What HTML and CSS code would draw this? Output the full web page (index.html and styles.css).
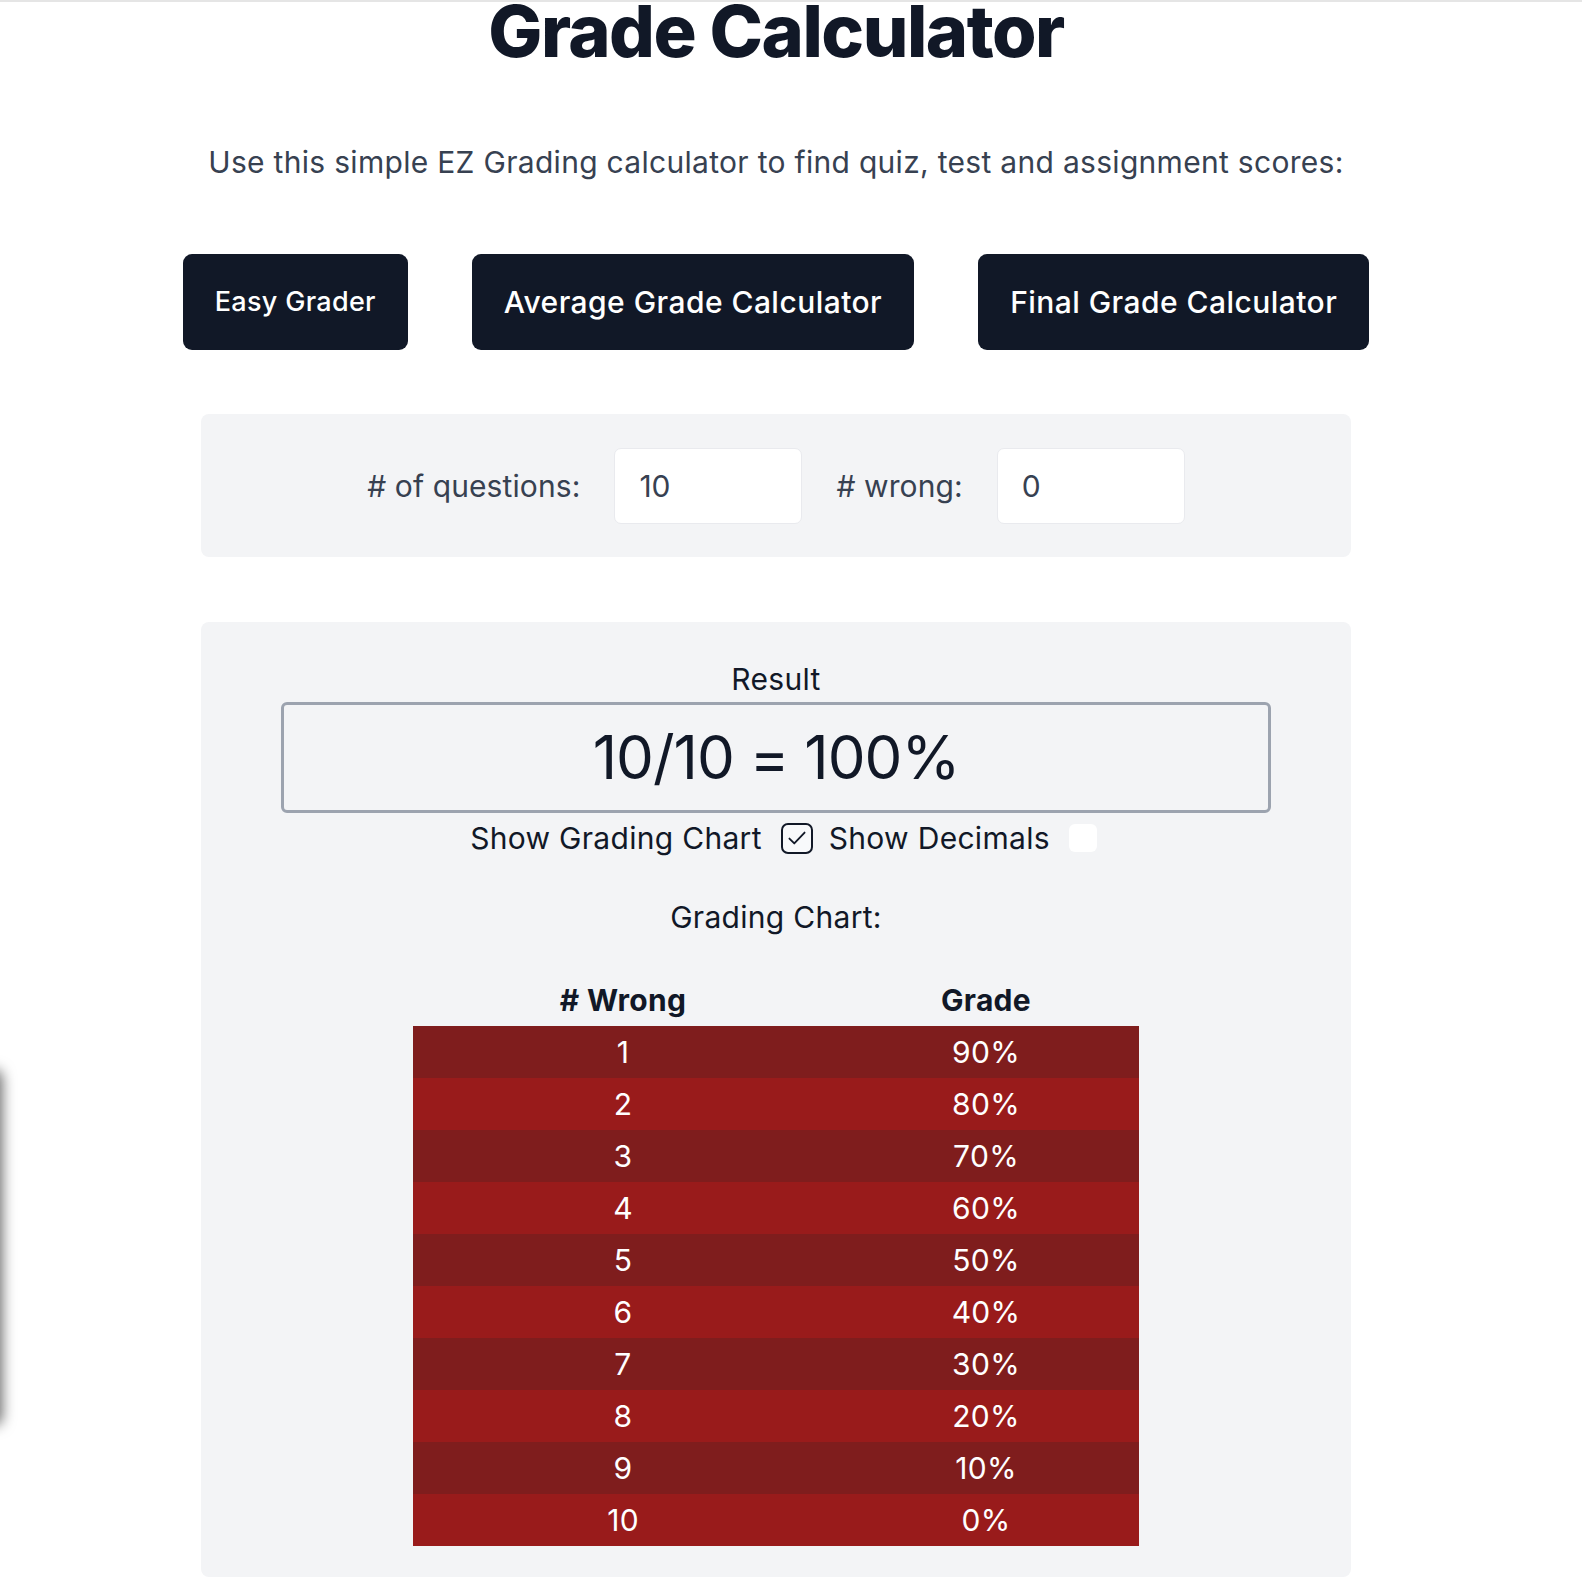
FILE: index.html
```html
<!DOCTYPE html>
<html>
<head>
    <title>Grade Calculator</title>
    <link rel="stylesheet" href="styles.css">
</head>
<body>
    <div class="side-tab"></div>

    <main class="page">
        <h1>Grade Calculator</h1>
        <p class="intro">Use this simple EZ Grading calculator to find quiz, test and assignment scores:</p>

        <nav class="tools">
            <a class="tool-btn small" href="#">Easy Grader</a>
            <a class="tool-btn" href="#">Average Grade Calculator</a>
            <a class="tool-btn" href="#">Final Grade Calculator</a>
        </nav>

        <section class="panel inputs">
            <label for="questions"># of questions:</label>
            <input type="text" id="questions" value="10">
            <label for="wrong"># wrong:</label>
            <input type="text" id="wrong" value="0">
        </section>

        <section class="panel result-panel">
            <div class="result-label">Result</div>
            <div class="result-box">10/10 = 100%</div>

            <div class="options">
                <span>Show Grading Chart</span>
                <span class="check checked">
                    <svg viewBox="0 0 24 24" width="26" height="26"><path d="M5 12.5l4.5 4.5L19 7" fill="none" stroke="#111827" stroke-width="1.7" stroke-linecap="round" stroke-linejoin="round"/></svg>
                </span>
                <span>Show Decimals</span>
                <span class="check"></span>
            </div>

            <h2 class="chart-title">Grading Chart:</h2>

            <table class="chart">
                <thead>
                    <tr>
                        <th># Wrong</th>
                        <th>Grade</th>
                    </tr>
                </thead>
                <tbody>
                    <tr><td>1</td><td>90%</td></tr>
                    <tr><td>2</td><td>80%</td></tr>
                    <tr><td>3</td><td>70%</td></tr>
                    <tr><td>4</td><td>60%</td></tr>
                    <tr><td>5</td><td>50%</td></tr>
                    <tr><td>6</td><td>40%</td></tr>
                    <tr><td>7</td><td>30%</td></tr>
                    <tr><td>8</td><td>20%</td></tr>
                    <tr><td>9</td><td>10%</td></tr>
                    <tr><td>10</td><td>0%</td></tr>
                </tbody>
            </table>
        </section>
    </main>
</body>
</html>
```

FILE: styles.css
```css
* {
    margin: 0;
    padding: 0;
    box-sizing: border-box;
}

body {
    font-family: Inter, "Noto Sans", sans-serif;
    color: #111827;
    background: white;
    border-top: 2px solid #e5e5e5;
    padding-right: 30px;
    position: relative;
    letter-spacing: 0.3px;
}

/* half hidden tab stuck to the left edge */
.side-tab {
    position: absolute;
    left: -40px;
    top: 1070px;
    width: 40px;
    height: 351px;
    background: #fff;
    border-radius: 6px;
    box-shadow: 0 0 14px 2px rgba(0,0,0,0.6);
}

.page {
    width: 1200px;
    margin: 0 auto;
    text-align: center;
}

h1 {
    font-size: 72px;
    line-height: 72px;
    font-weight: 800;
    letter-spacing: -1.5px;
    margin-top: -7px;
    color: #111827;
}

.intro {
    margin-top: 77px;
    font-size: 30px;
    line-height: 36px;
    color: #374151;
}

.tools {
    margin-top: 74px;
    display: flex;
    justify-content: center;
    gap: 64px;
}

.tool-btn {
    display: block;
    background: #111827;
    color: white;
    text-decoration: none;
    font-size: 30px;
    line-height: 36px;
    font-weight: 500;
    letter-spacing: 0.45px;
    padding: 30px 32px;
    border-radius: 9px;
}

.tool-btn.small {
    font-size: 27px;
    letter-spacing: 0.3px;
}

.panel {
    width: 1150px;
    margin: 0 auto;
    background: #f3f4f6;
    border-radius: 8px;
}

.inputs {
    margin-top: 64px;
    padding: 34px 32px 33px;
    display: flex;
    justify-content: center;
    align-items: center;
    gap: 34px;
}

.inputs label {
    font-size: 30px;
    line-height: 36px;
    color: #374151;
    letter-spacing: 0.1px;
}

.inputs input {
    width: 188px;
    font-family: inherit;
    font-size: 30px;
    line-height: 36px;
    color: #374151;
    padding: 19px 24px;
    border: 1px solid #e9eaee;
    border-radius: 7px;
    background: white;
    outline: none;
}

.result-panel {
    margin-top: 65px;
    padding: 39px 32px 31px;
}

.result-label {
    font-size: 30px;
    line-height: 36px;
}

.result-box {
    width: 990px;
    margin: 5px auto 0;
    border: 3px solid #9ca3af;
    border-radius: 6px;
    padding: 22px 0 23px;
    font-size: 60px;
    line-height: 60px;
    letter-spacing: -1px;
}

.options {
    margin-top: 7px;
    padding-left: 34px;
    display: flex;
    justify-content: center;
    align-items: center;
    font-size: 30px;
    line-height: 36px;
}

.check {
    width: 28px;
    height: 28px;
    margin: 0 19px 0 19px;
    background: white;
    border-radius: 6px;
    display: flex;
    align-items: center;
    justify-content: center;
}

.check.checked {
    width: 32px;
    height: 31px;
    margin: 0 16px 0 19px;
    background: #f8f9fb;
    border: 2px solid #111827;
    border-radius: 7px;
}

.chart-title {
    margin-top: 43px;
    font-size: 30px;
    line-height: 36px;
    font-weight: 400;
}

.chart {
    width: 726px;
    margin: 39px auto 0;
    border-collapse: collapse;
}

.chart th,
.chart td {
    height: 52px;
    font-size: 30px;
    text-align: center;
    padding: 0;
}

.chart th {
    font-weight: 700;
    color: #111827;
}

.chart th:first-child {
    width: 420px;
}

.chart td {
    color: white;
}

.chart tbody tr:nth-child(odd) {
    background: #7f1d1d;
}

.chart tbody tr:nth-child(even) {
    background: #991b1b;
}
```
